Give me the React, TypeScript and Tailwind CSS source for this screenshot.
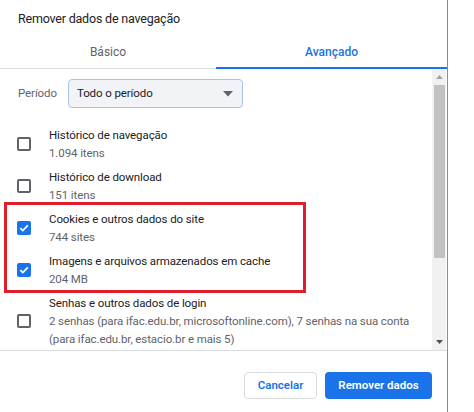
import React from 'react';

interface ItemProps {
  title: string;
  lines: string[];
  checked?: boolean;
}

const Checkbox: React.FC<{ checked?: boolean }> = ({ checked }) =>
  checked ? (
    <div className="w-[14px] h-[14px] rounded-[2px] bg-[#1a73e8] flex items-center justify-center shrink-0">
      <svg width="12" height="12" viewBox="0 0 12 12">
        <path d="M2.3 6.2 L4.8 8.6 L9.8 3.4" fill="none" stroke="white" strokeWidth="1.8" />
      </svg>
    </div>
  ) : (
    <div className="w-[14px] h-[14px] rounded-[2px] border-2 border-[#5f6368] shrink-0" />
  );

const Item: React.FC<ItemProps> = ({ title, lines, checked }) => (
  <div className="flex items-center py-[3px]">
    <div className="w-[49px] pl-[17px] flex">
      <Checkbox checked={checked} />
    </div>
    <div className="flex flex-col text-[11.5px] tracking-[-0.1px] leading-[18px] whitespace-nowrap">
      <span className="text-[#202124]">{title}</span>
      {lines.map((l) => (
        <span key={l} className="text-[#5f6368]">
          {l}
        </span>
      ))}
    </div>
  </div>
);

export default function App() {
  return (
    <div className="relative w-[474px] h-[412px] bg-white flex" style={{ fontFamily: 'Roboto, "Noto Sans", sans-serif' }}>
      <div className="w-[448px] h-full border-r border-[#8c8c8c] flex flex-col">
        {/* Title */}
        <div className="h-[36px] pl-[18px] pt-[9px] text-[12.5px] tracking-[-0.2px] leading-[20px] text-[#202124]">
          Remover dados de navegação
        </div>

        {/* Tabs */}
        <div className="flex h-[33px] text-[12px]">
          <div className="w-[216px] flex items-center justify-center text-[#5f6368] border-b border-[#dadce0]">
            Básico
          </div>
          <div className="flex-1 flex items-center justify-center text-[#1a73e8] font-medium border-b-2 border-[#1a73e8]">
            Avançado
          </div>
        </div>

        {/* Scroll content */}
        <div className="h-[281px] flex">
          <div className="flex-1 flex flex-col">
            <div className="flex items-center pt-[10px] pl-[18px] gap-[11px] text-[11.5px] tracking-[-0.1px]">
              <span className="text-[#5f6368]">Período</span>
              <div className="w-[175px] h-[29px] rounded-[4px] border border-[#a8c2ea] bg-[#f1f3f6] flex items-center justify-between pl-[8px] pr-[9px] text-[#202124]">
                <span>Todo o período</span>
                <svg width="10" height="6" viewBox="0 0 10 6">
                  <path d="M0 0 H10 L5 5.5 Z" fill="#5f6368" />
                </svg>
              </div>
            </div>
            <div className="flex flex-col mt-[15px]">
              <Item title="Histórico de navegação" lines={['1.094 itens']} />
              <Item title="Histórico de download" lines={['151 itens']} />
              <Item title="Cookies e outros dados do site" lines={['744 sites']} checked />
              <Item title="Imagens e arquivos armazenados em cache" lines={['204 MB']} checked />
              <Item
                title="Senhas e outros dados de login"
                lines={['2 senhas (para ifac.edu.br, microsoftonline.com), 7 senhas na sua conta', '(para ifac.edu.br, estacio.br e mais 5)']}
              />
            </div>
          </div>
          {/* Scrollbar */}
          <div className="w-[14px] mr-px bg-[#f1f1f1] flex flex-col items-center">
            <div className="h-[16px] flex items-center justify-center">
              <svg width="7" height="4" viewBox="0 0 7 4">
                <path d="M0 4 L3.5 0 L7 4 Z" fill="#a3a3a3" />
              </svg>
            </div>
            <div className="w-[11px] h-[173px] bg-[#c1c1c1]" />
            <div className="flex-1" />
            <div className="h-[16px] flex items-center justify-center">
              <svg width="7" height="4" viewBox="0 0 7 4">
                <path d="M0 0 L3.5 4 L7 0 Z" fill="#505050" />
              </svg>
            </div>
          </div>
        </div>

        {/* Footer */}
        <div className="border-t border-[#dadce0] flex justify-end gap-[8px] pt-[21px] pr-[15px] text-[11.5px] font-semibold">
          <button className="w-[73px] h-[27px] rounded-[4px] border border-[#dadce0] bg-white text-[#1a73e8]">
            Cancelar
          </button>
          <button className="w-[107px] h-[27px] rounded-[4px] bg-[#1a73e8] text-white">Remover dados</button>
        </div>
      </div>

      {/* Annotation */}
      <div className="absolute left-[4px] top-[202px] w-[302px] h-[91px] border-[3px] border-[#e01e2b]" />
    </div>
  );
}
